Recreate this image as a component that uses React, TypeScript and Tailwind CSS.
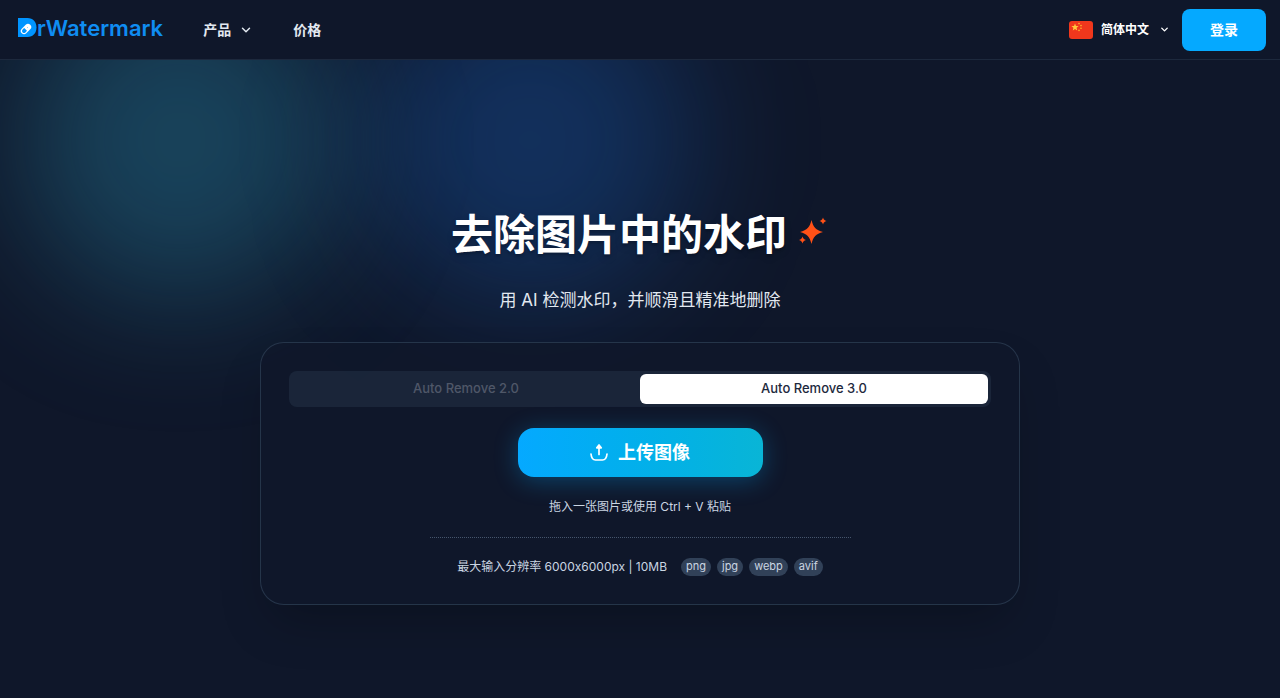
import { ChevronDown } from "lucide-react";

const models = ["Auto Remove 2.0", "Auto Remove 3.0"];
const formats = ["png", "jpg", "webp", "avif"];

function Logo() {
  return (
    <a href="#" className="mb-1 flex items-center text-[#0f8df2]">
      <svg width="19" height="19" viewBox="0 0 19 19" aria-hidden="true">
        <path
          d="M0 0h9.5C15 0 18.5 4 18.5 9.5S15 19 9.5 19H0z"
          fill="#0094ff"
        />
        <g transform="rotate(-45 8 11)">
          <rect x="2" y="7.8" width="12" height="6.4" rx="3.2" fill="#fff" />
          <path
            d="M7.4 9H5.200a2 2 0 0 0 0 4h2.200z"
            fill="#0094ff"
          />
          <circle cx="10" cy="11" r=".4" fill="#0094ff" />
        </g>
      </svg>
      <span className="text-[22px] leading-7 font-semibold">rWatermark</span>
    </a>
  );
}

function Flag() {
  return (
    <svg width="24" height="18" viewBox="0 0 24 18" aria-hidden="true">
      <rect width="24" height="18" rx="3" fill="#f0371c" />
      <path
        d="M6 2.500l1 2.400 2.600.2-2 1.700.6 2.600L6 8 3.800 9.400l.6-2.600-2-1.700 2.600-.2z"
        fill="#ffc93c"
      />
      <g fill="#ffb52e">
        <circle cx="10" cy="2.600" r=".8" />
        <circle cx="12" cy="4.600" r=".8" />
        <circle cx="12" cy="7.300" r=".8" />
        <circle cx="10" cy="9.400" r=".8" />
      </g>
    </svg>
  );
}

function Sparkles() {
  return (
    <svg width="30" height="36" viewBox="0 0 30 36" fill="#ff5117" aria-hidden="true">
      <path d="M12.500 3c1.800 7.200 4.300 10 11.500 12-7.200 2-9.700 4.800-11.500 12-1.800-7.200-4.300-10-11.500-12 7.200-2 9.700-4.800 11.500-12z" />
      <path d="M24 .5c.8 2.200 1.400 2.800 3.500 3.500-2.100.7-2.700 1.300-3.500 3.500-.8-2.200-1.400-2.800-3.500-3.500 2.100-.7 2.700-1.300 3.500-3.500z" />
      <path d="M3.500 19.500c.8 2.200 1.400 2.800 3.500 3.500-2.100.7-2.700 1.300-3.500 3.500C2.700 24.300 2.100 23.700 0 23c2.100-.7 2.700-1.300 3.500-3.500z" />
    </svg>
  );
}

function UploadIcon() {
  return (
    <svg
      width="18"
      height="18"
      viewBox="0 0 18 18"
      fill="none"
      stroke="currentColor"
      strokeWidth="1.700"
      strokeLinecap="round"
      strokeLinejoin="round"
      aria-hidden="true"
    >
      <path d="M1 10c.4 4 1.800 6 4.500 6h7c2.700 0 4.100-2 4.500-6" />
      <path d="M9 10.500V3" />
      <path d="M9 1l2.200 2.800H6.800z" fill="currentColor" />
    </svg>
  );
}

function Header() {
  return (
    <header className="relative z-10 flex h-15 items-center justify-between border-b border-slate-800 bg-[#0f172a] pr-3.5 pl-4.5">
      <div className="flex items-center">
        <Logo />
        <nav className="ml-10 flex items-center gap-10 text-sm font-bold text-slate-200">
          <button type="button" className="flex items-center gap-2">
            产品
            <ChevronDown size={14} strokeWidth={2.5} />
          </button>
          <a href="#">价格</a>
        </nav>
      </div>
      <div className="flex items-center gap-3">
        <label className="relative flex items-center gap-2 text-xs font-bold text-white">
          <Flag />
          <select aria-label="语言" className="appearance-none bg-transparent pr-5">
            <option>简体中文</option>
          </select>
          <ChevronDown
            size={11}
            strokeWidth={3}
            className="pointer-events-none absolute right-0"
          />
        </label>
        <button
          type="button"
          className="h-[42px] rounded-lg bg-[#05a9ff] px-7 text-sm font-bold text-white"
        >
          登录
        </button>
      </div>
    </header>
  );
}

function UploadCard() {
  return (
    <section className="mt-[29px] flex w-full max-w-[760px] flex-col items-center rounded-3xl border border-slate-700/70 bg-[#0f172a]/85 p-7 shadow-2xl">
      <div className="grid w-full grid-cols-2 rounded-lg bg-slate-800/80 p-[3px] text-[13px] font-medium">
        {models.map((model, i) => (
          <button
            key={model}
            type="button"
            className={
              i === 1
                ? "h-[30px] rounded-md bg-white text-slate-800"
                : "h-[30px] rounded-md text-[#4f5768]"
            }
          >
            {model}
          </button>
        ))}
      </div>

      <button
        type="button"
        className="mt-[21px] flex h-[49px] w-[245px] items-center justify-center gap-2.5 rounded-2xl bg-linear-to-r from-[#05a9ff] to-[#09b5d6] text-lg font-bold text-white shadow-[0_4px_24px_rgba(5,169,255,0.3)]"
      >
        <UploadIcon />
        上传图像
      </button>
      <p className="mt-5 text-xs leading-5 text-slate-300">
        拖入一张图片或使用 Ctrl + V 粘贴
      </p>

      <hr className="mt-5 w-full max-w-[421px] border-t border-dotted border-slate-600" />

      <div className="mt-5 flex items-center gap-3.5">
        <span className="text-xs leading-4 text-slate-300">
          最大输入分辨率 6000x6000px | 10MB
        </span>
        <ul className="flex gap-1.5">
          {formats.map((format) => (
            <li
              key={format}
              className="h-[18px] rounded-full bg-slate-700 px-[5px] text-[11px] leading-4 text-slate-300"
            >
              {format}
            </li>
          ))}
        </ul>
      </div>
    </section>
  );
}

export default function App() {
  return (
    <div className="relative min-h-screen overflow-hidden bg-[#0f172a] font-['Inter','Noto_Sans_CJK_SC',sans-serif]">
      <div className="absolute -top-5 left-5 size-80 rounded-full bg-[#2da7ca]/30 blur-3xl" />
      <div className="absolute -top-5 left-[370px] size-80 rounded-full bg-[#1b7bf2]/25 blur-3xl" />

      <Header />

      <main className="relative flex flex-col items-center px-6 pt-[147px] pb-12">
        <h1 className="flex items-center gap-3 text-[42px] leading-14 font-bold text-white text-shadow-lg">
          去除图片中的水印
          <Sparkles />
        </h1>
        <p className="mt-6 text-[17px] leading-[26px] text-slate-200">
          用 AI 检测水印，并顺滑且精准地删除
        </p>
        <UploadCard />
      </main>
    </div>
  );
}
